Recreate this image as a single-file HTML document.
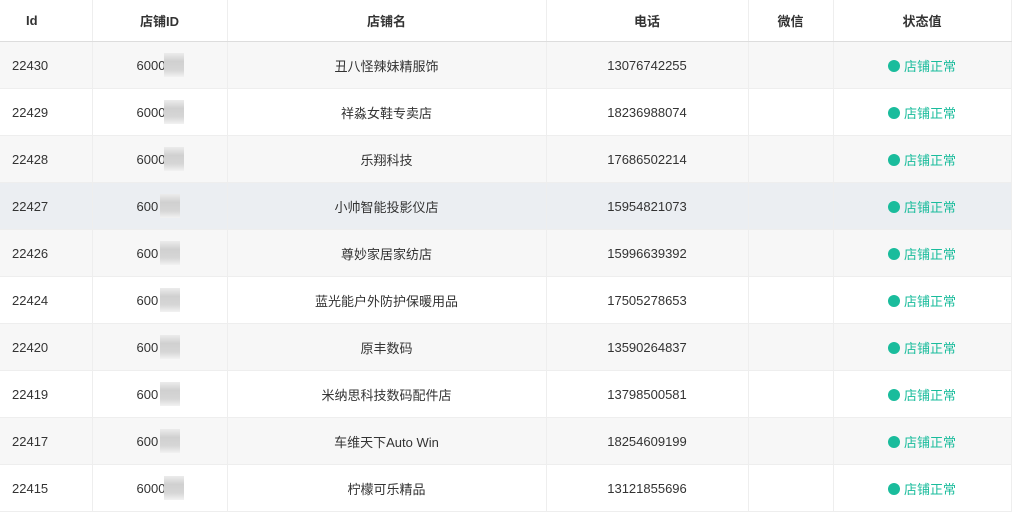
<!DOCTYPE html>
<html><head><meta charset="utf-8"><style>
body{margin:0;background:#fff;font-family:"Liberation Sans","Noto Sans CJK SC",sans-serif;font-size:13px;color:#333;}
table{border-collapse:collapse;table-layout:fixed;width:1011px;position:absolute;left:0;top:0;}
td,th{border-right:1px solid #eee;border-bottom:1px solid #eee;text-align:center;padding:0;height:46px;white-space:nowrap;overflow:hidden;}
th{height:41px;font-weight:bold;font-size:13px;color:#333;border-bottom:1px solid #ddd;}
td:first-child,th:first-child{text-align:left;padding-left:12px;}
th:first-child{padding-left:26px}
tr:nth-child(odd) td{background:#f7f7f7}
tr.h td{background:#ebeef2}
.s{color:#1abc9c}
.d{display:inline-block;width:12px;height:12px;border-radius:6px;background:#1abc9c;vertical-align:-1px;margin-right:4px}
td.b{position:relative;text-align:left;padding-left:44px}
.m{position:absolute;width:20px;height:24px;background:linear-gradient(#ececec,#d0d0d0 35%,#d6d6d6 70%,#f2f2f2);top:11px;left:71px}
</style></head><body>
<table>
<colgroup><col style="width:92px"><col style="width:135px"><col style="width:319px"><col style="width:202px"><col style="width:85px"><col style="width:178px"></colgroup>
<thead><tr><th>Id</th><th>店铺ID</th><th>店铺名</th><th>电话</th><th>微信</th><th>状态值</th></tr></thead>
<tbody>
<tr><td>22430</td><td class="b">60000<span class="m"></span></td><td>丑八怪辣妹精服饰</td><td>13076742255</td><td></td><td class="s"><span class="d"></span>店铺正常</td></tr>
<tr><td>22429</td><td class="b">6000<span class="m"></span></td><td>祥淼女鞋专卖店</td><td>18236988074</td><td></td><td class="s"><span class="d"></span>店铺正常</td></tr>
<tr><td>22428</td><td class="b">6000<span class="m"></span></td><td>乐翔科技</td><td>17686502214</td><td></td><td class="s"><span class="d"></span>店铺正常</td></tr>
<tr class="h"><td>22427</td><td class="b">600<span class="m" style="left:67px"></span></td><td>小帅智能投影仪店</td><td>15954821073</td><td></td><td class="s"><span class="d"></span>店铺正常</td></tr>
<tr><td>22426</td><td class="b">600<span class="m" style="left:67px"></span></td><td>尊妙家居家纺店</td><td>15996639392</td><td></td><td class="s"><span class="d"></span>店铺正常</td></tr>
<tr><td>22424</td><td class="b">600<span class="m" style="left:67px"></span></td><td>蓝光能户外防护保暖用品</td><td>17505278653</td><td></td><td class="s"><span class="d"></span>店铺正常</td></tr>
<tr><td>22420</td><td class="b">600<span class="m" style="left:67px"></span></td><td>原丰数码</td><td>13590264837</td><td></td><td class="s"><span class="d"></span>店铺正常</td></tr>
<tr><td>22419</td><td class="b">600<span class="m" style="left:67px"></span></td><td>米纳思科技数码配件店</td><td>13798500581</td><td></td><td class="s"><span class="d"></span>店铺正常</td></tr>
<tr><td>22417</td><td class="b">600<span class="m" style="left:67px"></span></td><td>车维天下Auto Win</td><td>18254609199</td><td></td><td class="s"><span class="d"></span>店铺正常</td></tr>
<tr><td>22415</td><td class="b">6000<span class="m"></span></td><td>柠檬可乐精品</td><td>13121855696</td><td></td><td class="s"><span class="d"></span>店铺正常</td></tr>
</tbody></table>
</body></html>
